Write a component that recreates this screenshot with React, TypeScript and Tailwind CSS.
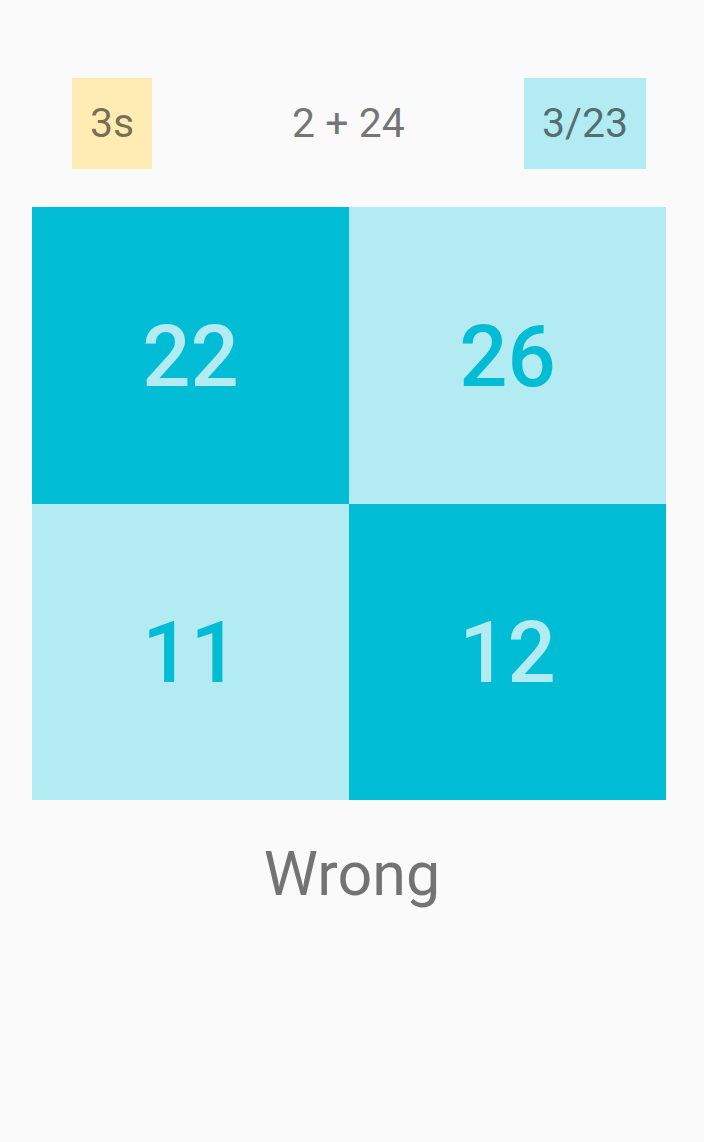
export default function App() {
  const cells = [
    { n: 22, dark: true },
    { n: 26, dark: false },
    { n: 11, dark: false },
    { n: 12, dark: true },
  ];

  return (
    <div className="min-h-[1142px] w-[704px] bg-[#fafafa] font-['Roboto',sans-serif] text-black/[0.54]">
      <div className="flex items-center pt-[78px]">
        <div className="ml-[72px] flex h-[91px] w-[80px] items-center justify-center bg-[#ffecb3] text-[41px] leading-none">
          3s
        </div>
        <div className="ml-[140px] w-[112px] whitespace-nowrap text-center text-[41px] leading-none">2 + 24</div>
        <div className="ml-[120px] flex h-[91px] w-[122px] items-center justify-center bg-[#b2ebf2] text-[41px] leading-none">
          3/23
        </div>
      </div>

      <div className="ml-[32px] mt-[38px] grid w-[634px] grid-cols-2">
        {cells.map((c) => (
          <div
            key={c.n}
            className={
              c.dark
                ? "flex h-[296.5px] items-center justify-center bg-[#00bcd4] pt-[4px] text-[85px] font-medium leading-none text-[#b2ebf2]"
                : "flex h-[296.5px] items-center justify-center bg-[#b2ebf2] pt-[4px] text-[85px] font-medium leading-none text-[#00bcd4]"
            }
          >
            {c.n}
          </div>
        ))}
      </div>

      <div className="mt-[38px] text-center text-[61px] leading-[1.2]">Wrong</div>
    </div>
  );
}
